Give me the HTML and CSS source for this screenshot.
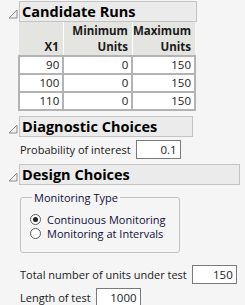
FILE: index.html
```html
<!DOCTYPE html>
<html lang="en">
<head>
    <meta charset="UTF-8">
    <meta name="viewport" content="width=device-width, initial-scale=1.0">
    <title>Candidate Runs</title>
    <link rel="stylesheet" href="styles.css">
</head>
<body>
    <section class="outline">
        <div class="outline-head">
            <svg class="disclosure" width="10" height="10" viewBox="0 0 10 10"><path d="M9 1 L9 9 L1 9 Z" fill="#f2f2f2" stroke="#8c8c8c" stroke-width="1"/></svg>
            <h2 class="outline-title runs-title">Candidate Runs</h2>
        </div>
        <table class="runs">
            <thead>
                <tr>
                    <th class="col-x">X1</th>
                    <th class="col-min">Minimum<br>Units</th>
                    <th class="col-max">Maximum<br>Units</th>
                </tr>
            </thead>
            <tbody>
                <tr><td>90</td><td>0</td><td>150</td></tr>
                <tr><td>100</td><td>0</td><td>150</td></tr>
                <tr><td>110</td><td>0</td><td>150</td></tr>
            </tbody>
        </table>
    </section>

    <section class="outline">
        <div class="outline-head">
            <svg class="disclosure" width="10" height="10" viewBox="0 0 10 10"><path d="M9 1 L9 9 L1 9 Z" fill="#f2f2f2" stroke="#8c8c8c" stroke-width="1"/></svg>
            <h2 class="outline-title diag-title">Diagnostic Choices</h2>
        </div>
        <div class="field">
            <span>Probability of interest</span>
            <span class="number-box">0.1</span>
        </div>
    </section>

    <section class="outline">
        <div class="outline-head">
            <svg class="disclosure" width="10" height="10" viewBox="0 0 10 10"><path d="M9 1 L9 9 L1 9 Z" fill="#f2f2f2" stroke="#8c8c8c" stroke-width="1"/></svg>
            <h2 class="outline-title design-title">Design Choices</h2>
        </div>
        <fieldset class="group">
            <legend>Monitoring Type</legend>
            <div class="radio-row"><span class="radio checked"></span>Continuous Monitoring</div>
            <div class="radio-row"><span class="radio"></span>Monitoring at Intervals</div>
        </fieldset>
        <div class="field units-field">
            <span>Total number of units under test</span>
            <span class="number-box">150</span>
        </div>
        <div class="field length-field">
            <span>Length of test</span>
            <span class="number-box">1000</span>
        </div>
    </section>
</body>
</html>
```

FILE: styles.css
```css
body {
    font-family: "Open Sans", "Noto Sans", sans-serif;
    font-size: 11px;
    color: #1a1a1a;
    background-color: #f5f5f5;
    margin: 0;
    padding: 1px 0 0 0;
}
.outline {
    margin-bottom: 5px;
}
.outline-head {
    display: flex;
    align-items: flex-start;
}
.disclosure {
    margin: 8px 1px 0 8px;
    flex-shrink: 0;
}
.outline-title {
    margin: 0;
    height: 19px;
    padding: 0 0 0 2px;
    font-size: 14.5px;
    line-height: 19px;
    font-weight: bold;
    color: #000;
    background-color: #ebebeb;
    border: 1px solid #c4c4c4;
}
.runs-title {
    width: 174px;
}
.diag-title {
    width: 170px;
}
.design-title {
    width: 217px;
}
.runs {
    margin-left: 18px;
    border-collapse: collapse;
    width: 178px;
}
.runs th {
    background-color: #e4e4e0;
    font-weight: bold;
    font-size: 11.5px;
    text-align: right;
    vertical-align: bottom;
    line-height: 16px;
    padding: 1px 4px 0 0;
    border-left: 1px solid #fff;
    border-right: 1px solid #fff;
}
.runs th:first-child {
    border-left: none;
}
.runs th:last-child {
    border-right: none;
}
.runs .col-x {
    width: 44px;
}
.runs .col-min {
    width: 66px;
}
.runs td {
    background-color: #fff;
    font-size: 11.5px;
    text-align: right;
    line-height: 16px;
    padding: 0 3px 0 0;
    border: 2px solid #b3b3b3;
}
.field {
    display: flex;
    align-items: center;
    gap: 5px;
    margin: 3px 0 0 20px;
    white-space: nowrap;
}
.number-box {
    display: inline-block;
    width: 40px;
    height: 17px;
    line-height: 17px;
    padding-right: 3px;
    font-size: 11.5px;
    text-align: right;
    background-color: #fff;
    border: 1px solid #7a7a7a;
}
.group {
    width: 160px;
    height: 63px;
    margin: 5px 0 0 20px;
    padding: 7px 0 0 9px;
    border: 1px solid #c2c2c2;
    border-radius: 3px;
    box-sizing: border-box;
}
.group legend {
    padding: 0 2px;
    margin-left: 2px;
    color: #10103a;
}
.radio-row {
    display: flex;
    align-items: center;
    height: 14px;
    white-space: nowrap;
    color: #10103a;
}
.radio {
    position: relative;
    width: 11px;
    height: 11px;
    margin-right: 6px;
    border: 1px solid #5a5a5a;
    border-radius: 50%;
    background-color: #fff;
    box-sizing: border-box;
}
.radio.checked::after {
    content: "";
    position: absolute;
    left: 2px;
    top: 2px;
    width: 5px;
    height: 5px;
    border-radius: 50%;
    background-color: #222;
}
.units-field {
    margin-top: 12px;
}
.length-field {
    margin-top: 4px;
}
```
